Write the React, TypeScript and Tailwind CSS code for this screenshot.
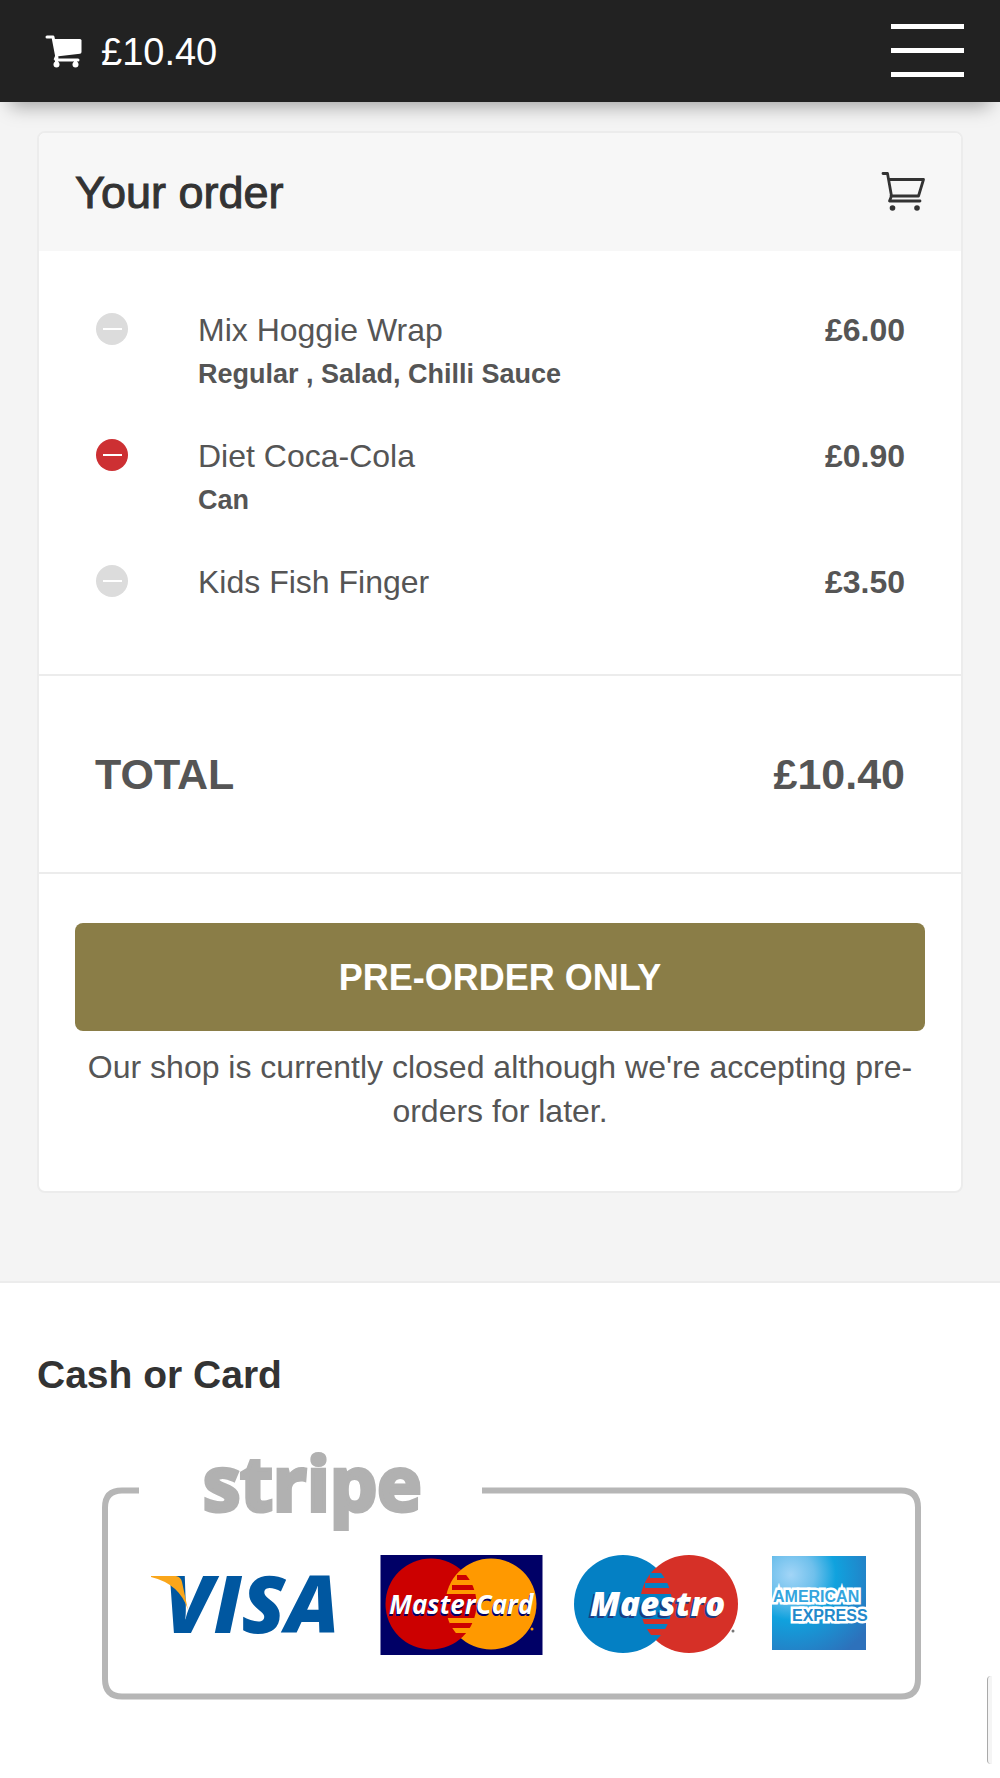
import React, { useState } from 'react'

interface OrderItem {
  id: number
  name: string
  options?: string
  price: string
  removable: boolean
}

const ORDER_ITEMS: OrderItem[] = [
  { id: 1, name: 'Mix Hoggie Wrap', options: 'Regular , Salad, Chilli Sauce', price: '£6.00', removable: false },
  { id: 2, name: 'Diet Coca-Cola', options: 'Can', price: '£0.90', removable: true },
  { id: 3, name: 'Kids Fish Finger', price: '£3.50', removable: false },
]

const TOTAL = '£10.40'

export default function App() {
  const [menuOpen, setMenuOpen] = useState(false)

  return (
    <div className="min-h-screen overflow-x-hidden bg-[#f4f4f4] font-['Liberation_Sans',Arial,sans-serif] text-[#555]">
      <header className="relative flex h-[102px] items-center justify-between bg-[#222] pr-9 pb-px pl-[45px] shadow-[0_14px_18px_-10px_rgba(0,0,0,0.35)]">
        <a href="#order" className="flex items-center gap-[18px] pt-0.5 text-[38px] leading-none text-white">
          <SolidCartIcon />
          {TOTAL}
        </a>
        <button
          type="button"
          aria-label="Menu"
          aria-expanded={menuOpen}
          onClick={() => setMenuOpen(o => !o)}
          className="flex w-[73px] flex-col gap-[19px]"
        >
          <span className="h-[5px] bg-white" />
          <span className="h-[5px] bg-white" />
          <span className="h-[5px] bg-white" />
        </button>
      </header>

      <main className="px-[37px] pt-[29px] pb-[88px]">
        <section id="order" className="overflow-hidden rounded-lg border-2 border-[#ececec] bg-white">
          <div className="flex h-[118px] items-center justify-between bg-[#f7f7f7] px-9 text-[#333]">
            <h1 className="text-[45px] leading-none [-webkit-text-stroke:1px]">Your order</h1>
            <OutlineCartIcon />
          </div>

          <ul className="space-y-[38px] pt-[57px] pr-[56px] pb-[70px] pl-[57px]">
            {ORDER_ITEMS.map(item => (
              <OrderRow key={item.id} item={item} />
            ))}
          </ul>

          <div className="flex h-[200px] items-center justify-between border-y-2 border-[#ececec] px-[56px] text-[43px] font-bold">
            <span>TOTAL</span>
            <span>{TOTAL}</span>
          </div>

          <div className="px-9 pt-[49px] pb-[58px] text-center">
            <button type="button" className="h-[108px] w-full rounded-lg bg-[#8a7d47] pt-0.5 text-4xl font-bold text-white">
              PRE-ORDER ONLY
            </button>
            <p className="mt-3.5 text-[32px] leading-[44px]">
              Our shop is currently closed although we're accepting pre-orders for later.
            </p>
          </div>
        </section>
      </main>

      <footer className="border-t-2 border-[#ececec] bg-white px-[37px] pt-[70px] pb-[68px]">
        <h2 className="text-[39px] leading-[44px] font-bold text-[#333]">Cash or Card</h2>
        <PaymentMethods />
      </footer>

      {/* edge of the side panel peeking in from the right */}
      <div className="fixed right-2 bottom-[14px] h-[88px] w-[5px] rounded-l-sm border-l border-[#aaa] bg-[#f5f5f5]" />
    </div>
  )
}

const OrderRow: React.FC<{ item: OrderItem }> = ({ item }) => (
  <li className="flex items-start">
    <button
      type="button"
      disabled={!item.removable}
      aria-label={`Remove ${item.name}`}
      className={`mt-[5px] mr-[70px] flex h-8 w-8 shrink-0 items-center justify-center rounded-full ${
        item.removable ? 'bg-[#cd3033]' : 'bg-[#dcdcdc]'
      }`}
    >
      <span className="h-0.5 w-[19px] bg-white" />
    </button>
    <div className="flex-1 leading-[44px]">
      <p className="text-[32px]">{item.name}</p>
      {item.options && <p className="text-[27px] font-bold">{item.options}</p>}
    </div>
    <span className="text-[32px] leading-[44px] font-bold">{item.price}</span>
  </li>
)

const SolidCartIcon: React.FC = () => (
  <svg width="38" height="34" viewBox="0 0 38 34" fill="#fff" aria-hidden="true">
    <path d="M2 2 H8 L12 23" fill="none" stroke="#fff" strokeWidth="3" strokeLinecap="round" strokeLinejoin="round" />
    <path d="M8 4 H35 Q36.500 4 36.500 5.500 V17 Q36.500 18.500 35 18.700 L11.500 21.500 Z" />
    <path d="M11 25 H33" fill="none" stroke="#fff" strokeWidth="3" strokeLinecap="round" />
    <path d="M10 25 L12 20 M11.500 25 V29 M30.500 25 V29" fill="none" stroke="#fff" strokeWidth="3" />
    <circle cx="11.500" cy="29.500" r="3" />
    <circle cx="30.500" cy="29.500" r="3" />
  </svg>
)

const OutlineCartIcon: React.FC = () => (
  <svg width="44" height="40" viewBox="0 0 44 40" fill="none" aria-hidden="true">
    <path
      d="M2 1.500 H6.500 L10.500 24 L8.500 29 H39 M7.500 7.500 H42.500 L37.500 24 H10"
      stroke="#333"
      strokeWidth="2.800"
      strokeLinecap="round"
      strokeLinejoin="round"
    />
    <circle cx="11.500" cy="36" r="2.800" fill="#333" />
    <circle cx="36" cy="36" r="2.800" fill="#333" />
  </svg>
)

const PaymentMethods: React.FC = () => (
  <svg
    viewBox="0 0 926 280"
    className="mt-[33px] w-full"
    role="img"
    aria-label="Payments by Stripe: Visa, MasterCard, Maestro, American Express"
  >
    <defs>
      <radialGradient id="amex" cx="0.2" cy="0.2" r="1">
        <stop offset="0" stopColor="#a2d5f7" />
        <stop offset="0.250" stopColor="#6fc0ec" />
        <stop offset="0.480" stopColor="#10a2de" />
        <stop offset="1" stopColor="#2d71bb" />
      </radialGradient>
      <clipPath id="mcLeft"><circle cx="394" cy="174" r="45.500" /></clipPath>
      <clipPath id="maestroLeft"><circle cx="586" cy="174" r="49" /></clipPath>
    </defs>

    {/* frame, open behind the stripe name */}
    <path
      d="M102 60.500 H85 Q68 60.500 68 77.500 V249 Q68 266.500 85 266.500 H864 Q881 266.500 881 249 V77.500 Q881 60.500 864 60.500 H445"
      fill="none"
      stroke="#b6b6b6"
      strokeWidth="6"
    />
    <text
      x="166" y="81" fontSize="75" fontWeight="700" fill="#b1b1b1" stroke="#b1b1b1" strokeWidth="4"
      fontFamily="'Open Sans', sans-serif"
    >
      stripe
    </text>

    {/* Visa */}
    <text x="127" y="203" fontSize="80" fontWeight="800" fontStyle="italic" fill="#0057a0" fontFamily="'Open Sans', sans-serif">
      VISA
    </text>
    <path d="M114 146 H139 Q144 147 145 152 L151 180 Q143 154 114 147 Z" fill="#faa61a" />

    {/* MasterCard */}
    <rect x="343.500" y="125" width="162" height="100" fill="#000066" />
    <circle cx="394" cy="174" r="45.500" fill="#cc0000" />
    <circle cx="454" cy="174" r="45.500" fill="#ff9900" />
    <g clipPath="url(#mcLeft)" fill="#cc0000">
      <rect x="420" y="145" width="20" height="5" />
      <rect x="415" y="155" width="25" height="5" />
      <rect x="409" y="164" width="31" height="24" />
      <rect x="413" y="193" width="27" height="5" />
      <rect x="419" y="203" width="21" height="5" />
    </g>
    <g fontFamily="'Open Sans', sans-serif" fontSize="26" fontWeight="700" fontStyle="italic">
      <text x="351" y="186" fill="#000066" aria-hidden="true">MasterCard</text>
      <text x="352" y="184" fill="#fff">MasterCard</text>
    </g>
    <circle cx="495" cy="199" r="1.500" fill="#ff9900" />

    {/* Maestro */}
    <circle cx="586" cy="174" r="49" fill="#0480c4" />
    <circle cx="652" cy="174" r="49" fill="#d63027" />
    <g clipPath="url(#maestroLeft)" fill="#0480c4">
      <rect x="613" y="143" width="24" height="5" />
      <rect x="608" y="153" width="29" height="5" />
      <rect x="602" y="164" width="35" height="25" />
      <rect x="606" y="194" width="31" height="5" />
      <rect x="612" y="205" width="25" height="5" />
    </g>
    <g fontFamily="'Open Sans', sans-serif" fontSize="33" fontWeight="800" fontStyle="italic">
      <text x="551" y="188" fill="#1c3c84" aria-hidden="true">Maestro</text>
      <text x="553" y="186" fill="#fff">Maestro</text>
    </g>
    <circle cx="696" cy="201" r="1.500" fill="#777" />

    {/* American Express */}
    <rect x="735" y="126" width="94" height="94" fill="url(#amex)" />
    <g
      fontFamily="'Liberation Sans', Arial, sans-serif"
      fontSize="16"
      fontWeight="700"
      stroke="#fff"
      strokeWidth="5"
      paintOrder="stroke"
    >
      <text x="736" y="172" fill="#35a5de">AMERICAN</text>
      <text x="755" y="191" fill="#2389cb">EXPRESS</text>
    </g>
  </svg>
)
